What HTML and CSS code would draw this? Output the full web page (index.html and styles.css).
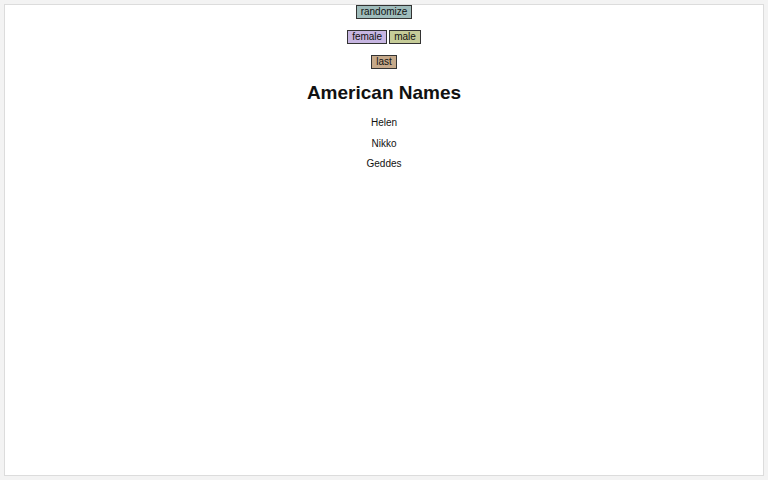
FILE: index.html
```html
<!DOCTYPE html>
<html lang="en">
<head>
  <meta charset="UTF-8" />
  <meta name="viewport" content="width=device-width, initial-scale=1.0"/>
  <title>American Names</title>
  <link rel="stylesheet" href="styles.css">
</head>
<body>
  <div class="page">
    <div class="row">
      <button class="btn randomize">randomize</button>
    </div>
    <div class="row">
      <button class="btn female">female</button>
      <button class="btn male">male</button>
    </div>
    <div class="row">
      <button class="btn last">last</button>
    </div>

    <h1>American Names</h1>

    <div class="names">
      <div class="name">Helen</div>
      <div class="name">Nikko</div>
      <div class="name">Geddes</div>
    </div>
  </div>
</body>
</html>
```

FILE: styles.css
```css
body {
  margin: 0;
  padding: 4px;
  background: #f3f3f3;
  font-family: 'Liberation Sans', Arial, sans-serif;
  color: #111;
}

.page {
  box-sizing: border-box;
  height: 472px;
  background: #fff;
  border: 1px solid #dcdcdc;
  text-align: center;
}

.row {
  display: flex;
  justify-content: center;
  gap: 2px;
  height: 14px;
  margin-bottom: 11px;
}

.btn {
  font-family: inherit;
  font-size: 10px;
  line-height: 12px;
  height: 14px;
  padding: 0 4px;
  margin: 0;
  border: 1px solid #333;
  border-radius: 0;
  color: #111;
  cursor: pointer;
}

.randomize { background: #9fbcbb; }
.female { background: #c7b6e2; }
.male { background: #c6cc98; }
.last { background: #c6a98a; }

h1 {
  font-size: 19px;
  line-height: 22px;
  margin: 13px 0 9px;
}

.name {
  font-size: 10px;
  line-height: 20.5px;
}
```
